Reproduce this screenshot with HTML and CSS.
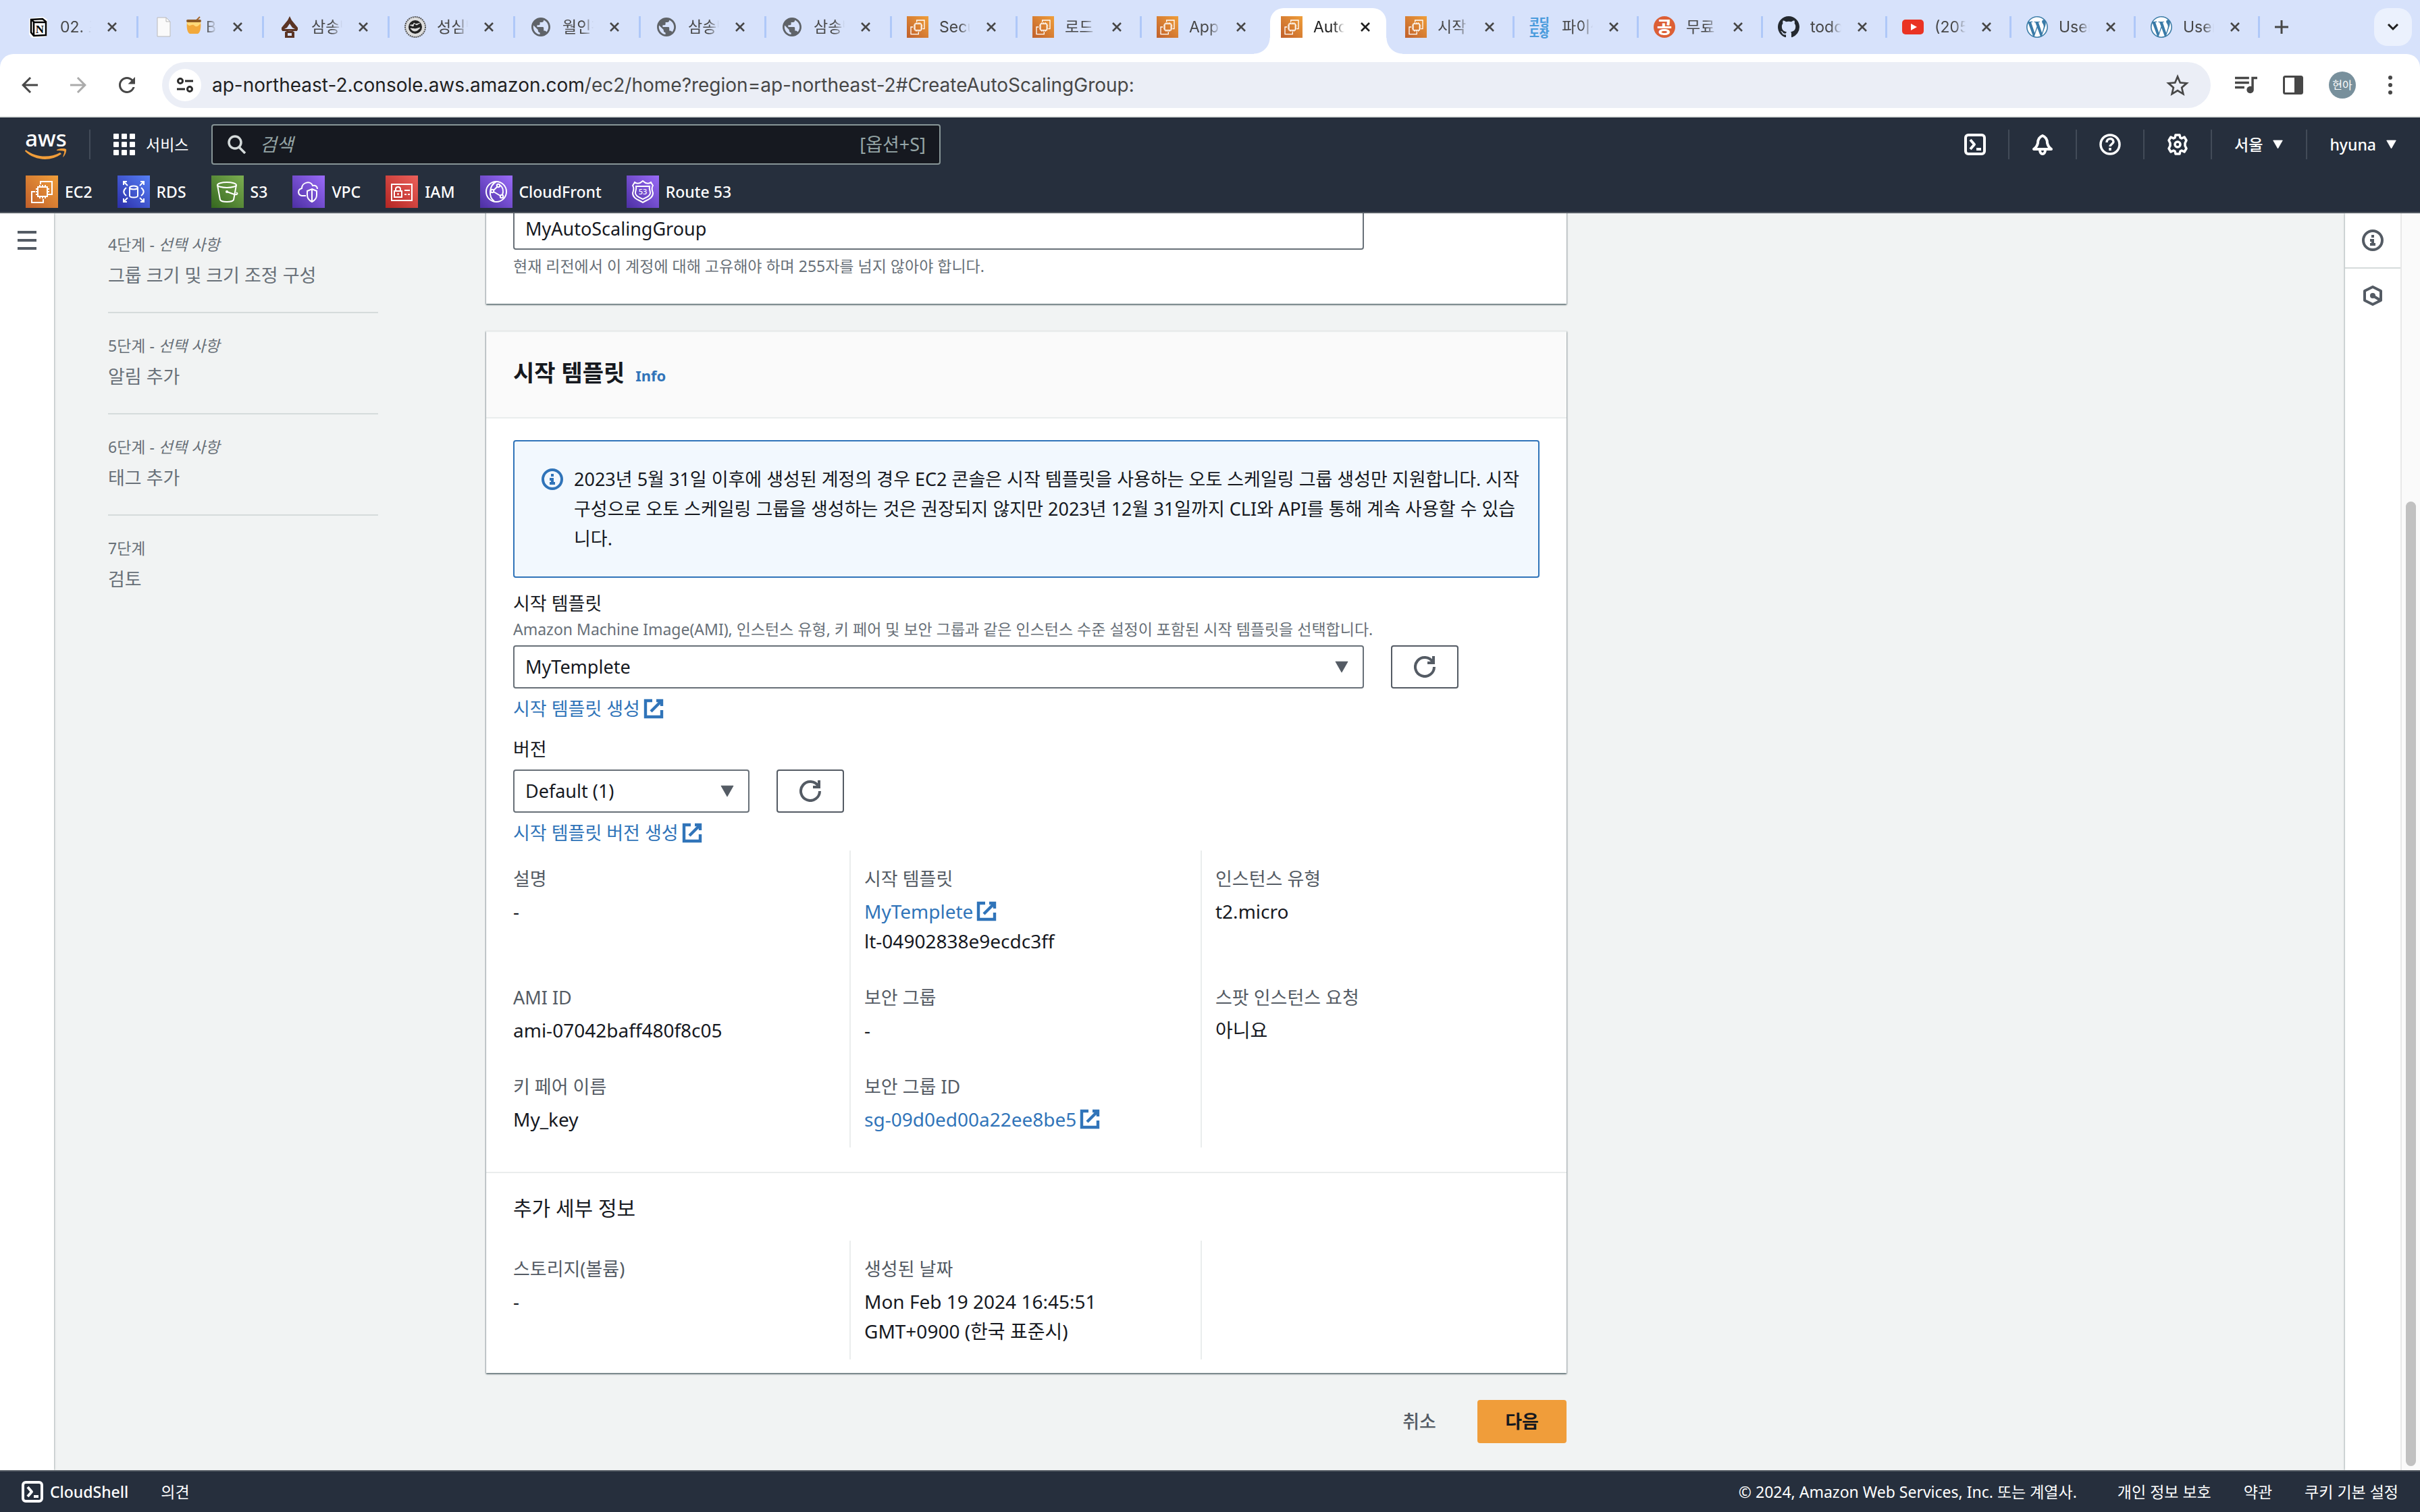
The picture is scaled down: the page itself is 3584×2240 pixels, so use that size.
FILE: index.html
```html
<!DOCTYPE html>
<html lang="ko">
<head>
<meta charset="utf-8">
<title>Auto Scaling 그룹 생성</title>
<link rel="stylesheet" href="styles.css">
</head>
<body>
<svg class="sprite" aria-hidden="true">
  <symbol id="close" viewBox="0 0 14 14"><path d="M1 1l12 12M13 1L1 13" fill="none" stroke="currentColor" stroke-width="2.6"/></symbol>
  <symbol id="globe" viewBox="2 2 20 20"><path fill="#5f6368" d="M12 2C6.48 2 2 6.48 2 12s4.48 10 10 10 10-4.48 10-10S17.52 2 12 2zm-1 17.93c-3.95-.49-7-3.85-7-7.93 0-.62.08-1.21.21-1.79L9 15v1c0 1.1.9 2 2 2v1.93zm6.9-2.54c-.26-.81-1-1.39-1.9-1.39h-1v-3c0-.55-.45-1-1-1H8v-2h2c.55 0 1-.45 1-1V7h2c1.1 0 2-.9 2-2v-.41c2.93 1.19 5 4.06 5 7.41 0 2.08-.8 3.97-2.1 5.39z"/></symbol>
  <symbol id="wordpress" viewBox="0 0 24 24"><circle cx="12" cy="12" r="12" fill="#fff"/><path fill="#3a7ba8" d="M21.469 6.825c.84 1.537 1.318 3.3 1.318 5.175 0 3.979-2.156 7.456-5.363 9.325l3.295-9.527c.615-1.54.82-2.771.82-3.864 0-.405-.026-.78-.07-1.11m-7.981.105c.647-.03 1.232-.105 1.232-.105.582-.075.514-.93-.067-.899 0 0-1.755.135-2.88.135-1.064 0-2.85-.15-2.85-.15-.585-.03-.661.855-.075.885 0 0 .54.061 1.125.09l1.68 4.605-2.37 7.08L5.354 6.9c.649-.03 1.234-.1 1.234-.1.585-.075.516-.93-.065-.896 0 0-1.746.138-2.874.138-.2 0-.438-.008-.69-.015C4.911 3.15 8.235 1.215 12 1.215c2.809 0 5.365 1.072 7.286 2.833-.046-.003-.091-.009-.141-.009-1.06 0-1.812.923-1.812 1.914 0 .89.513 1.643 1.06 2.531.411.72.89 1.643.89 2.977 0 .915-.354 1.994-.821 3.479l-1.075 3.585-3.9-11.61.001.014zM12 22.784c-1.059 0-2.081-.153-3.048-.437l3.237-9.406 3.315 9.087c.024.053.05.101.078.149-1.12.393-2.325.609-3.582.609M1.211 12c0-1.564.336-3.05.935-4.39L7.29 21.709C3.694 19.96 1.212 16.271 1.211 12M12 0C5.385 0 0 5.385 0 12s5.385 12 12 12 12-5.385 12-12S18.615 0 12 0"/></symbol>
  <symbol id="ec2" viewBox="0 0 48 48"><g fill="none" stroke="#fff" stroke-width="2"><path d="M22 13V9h17v19h-4M14 24H9v16h17v-5"/><rect x="18" y="17" width="14" height="14"/><path d="M21 17v-3M25 17v-3M29 17v-3M21 34v-3M25 34v-3M29 34v-3M18 20h-3M18 24h-3M18 28h-3M35 20h-3M35 24h-3M35 28h-3"/></g></symbol>
  <symbol id="rds" viewBox="0 0 48 48"><g fill="none" stroke="#fff" stroke-width="2"><path d="M9 14V9h5M9 9l6 6M34 9h5v5M39 9l-6 6M9 34v5h5M9 39l6-6M39 34v5h-5M39 39l-6-6"/><ellipse cx="24" cy="18" rx="6" ry="2.5"/><path d="M18 18v12c0 3.300 12 3.300 12 0V18M13 18c-5 4-5 8 0 12M35 18c5 4 5 8 0 12"/></g></symbol>
  <symbol id="s3" viewBox="0 0 48 48"><g fill="none" stroke="#fff" stroke-width="2"><ellipse cx="23" cy="14" rx="14" ry="4"/><path d="M9 14l4 22c2 4 18 4 20 0l4-22M23 24l11 4c4 1 6-1 3-3"/></g><circle cx="23" cy="24" r="2" fill="#fff"/></symbol>
  <symbol id="vpc" viewBox="0 0 48 48"><g fill="none" stroke="#fff" stroke-width="2"><path d="M20 30h-6c-6-1-7-9 0-11 0-9 13-12 16-4 4-1 7 1 7 5"/><path d="M29 20l7 3v6c0 5-3 8-7 10-4-2-7-5-7-10v-6zM29 20v19"/></g></symbol>
  <symbol id="iam" viewBox="0 0 48 48"><g fill="none" stroke="#fff" stroke-width="2"><rect x="9" y="13" width="30" height="24"/><rect x="13" y="23" width="11" height="9"/><path d="M15 23v-3c0-4 7-4 7 0v3M18.500 26v3M28 22h8M28 28h3M33 28h3"/></g></symbol>
  <symbol id="cloudfront" viewBox="0 0 48 48"><g fill="none" stroke="#fff" stroke-width="2"><circle cx="24" cy="24" r="15"/><path d="M24 9C13 15 12 32 21 38M26 16l-6 6M20 24l10 6"/><circle cx="27" cy="15" r="2.200"/><circle cx="18" cy="23" r="2.200"/><circle cx="32" cy="31" r="2.200"/><path d="M29 14c5 3 6 9 4 15"/></g></symbol>
  <symbol id="route53" viewBox="0 0 48 48"><g fill="none" stroke="#fff" stroke-width="2"><path d="M24 8l4 3c3 1 6 1 8-1l3 5c-3 4-1 7 0 11 0 8-9 10-15 14-6-4-15-6-15-14 1-4 3-7 0-11l3-5c2 2 5 2 8 1z"/><path d="M14 16h20c-1 4 1 6 1 10 0 5-7 7-11 9-4-2-11-4-11-9 0-4 2-6 1-10z"/></g><text x="24" y="28" text-anchor="middle" font-size="11" fill="#fff" font-family="Noto Sans, sans-serif">53</text></symbol>
  <symbol id="external" viewBox="0 0 16 16"><path d="M10 2h4v4M6 10l8-8M14 9v5H2V2h5" fill="none" stroke="currentColor" stroke-width="2.200"/></symbol>
  <symbol id="refresh" viewBox="0 0 16 16"><path d="M10 5h4.500V0M15 8a7 7 0 1 1-1-3.600" fill="none" stroke="currentColor" stroke-width="2"/></symbol>
  <symbol id="info" viewBox="0 0 16 16"><g fill="none" stroke="currentColor" stroke-width="2"><circle cx="8" cy="8" r="7"/><path d="M8 12V8H6M10 11H6M8 6V4"/></g></symbol>
  <symbol id="caret" viewBox="0 0 20 16"><path d="M2 1h16l-8 14z" fill="currentColor" stroke="currentColor" stroke-linejoin="round"/></symbol>
  <symbol id="shell" viewBox="0 0 32 32"><g fill="none" stroke="currentColor" stroke-width="4"><rect x="2" y="2" width="28" height="28" rx="4"/><path d="M9 9l6 7-6 7M18 23h7" stroke-linejoin="round"/></g></symbol>
</svg>

<header class="browser">
  <nav class="tabs" aria-label="탭">
    <div class="tab"><svg class="fav" viewBox="0 0 32 32"><path d="M3 3l20-2 6 4v23l-3 3-20 1-4-5V4z" fill="#fff"/><path d="M5 5l17-1 5 4v20L9 29l-4-5z" fill="#fff" stroke="#000" stroke-width="2.500"/><path d="M5 5l5 4h17M9 9v20" fill="none" stroke="#000" stroke-width="2.500"/><text x="18" y="25" text-anchor="middle" font-size="17" font-weight="700" font-family="Liberation Serif, serif">N</text></svg><span class="tab-title">02. 프</span><button class="x" aria-label="닫기"><svg><use href="#close"/></svg></button></div>
    <div class="tab"><svg class="fav" viewBox="0 0 32 32"><path d="M6 2h13l6 6v22H6z" fill="#fafafa" stroke="#b9b9b9"/><path d="M19 2v6h6" fill="none" stroke="#b9b9b9"/></svg><span class="tab-title"><svg class="honey" viewBox="0 0 24 28"><path d="M16 6l5-5" stroke="#a8672a" stroke-width="2"/><path d="M2 8c-1 8 0 16 4 18h12c4-2 5-10 4-18z" fill="#f2a93b"/><path d="M2 11c4 7 7-1 11 3 3 3 6 0 9-3V8H2z" fill="#ffd978"/><rect x="1" y="5" width="22" height="4" rx="2" fill="#8d5a25"/></svg>B</span><button class="x" aria-label="닫기"><svg><use href="#close"/></svg></button></div>
    <div class="tab"><svg class="fav" viewBox="0 0 32 32"><path d="M16 0l3 6 9 11v4l-8-4-4-6-4 6-8 4v-4l9-11z" fill="#5b3424"/><path d="M5 19h22v3H5zM9 24c0-3 14-3 14 0v8H9zm4 1v4h6v-4z" fill="#5b3424" fill-rule="evenodd"/></svg><span class="tab-title">삼송빵</span><button class="x" aria-label="닫기"><svg><use href="#close"/></svg></button></div>
    <div class="tab"><svg class="fav" viewBox="0 0 32 32"><circle cx="16" cy="16" r="15" fill="#ddd" stroke="#555" stroke-dasharray="2 1" stroke-width="2"/><circle cx="16" cy="16" r="10" fill="#222"/><path d="M8 13l5 2 1-5 4 3 5-3M9 18c4 6 10 5 14-1l-7 2z" fill="#ddd" stroke="#ddd"/></svg><span class="tab-title">성심당</span><button class="x" aria-label="닫기"><svg><use href="#close"/></svg></button></div>
    <div class="tab"><svg class="fav globe"><use href="#globe"/></svg><span class="tab-title">월인천</span><button class="x" aria-label="닫기"><svg><use href="#close"/></svg></button></div>
    <div class="tab"><svg class="fav globe"><use href="#globe"/></svg><span class="tab-title">삼송빵</span><button class="x" aria-label="닫기"><svg><use href="#close"/></svg></button></div>
    <div class="tab"><svg class="fav globe"><use href="#globe"/></svg><span class="tab-title">삼송빵</span><button class="x" aria-label="닫기"><svg><use href="#close"/></svg></button></div>
    <div class="tab"><svg class="fav orange"><use href="#ec2"/></svg><span class="tab-title">Secu</span><button class="x" aria-label="닫기"><svg><use href="#close"/></svg></button></div>
    <div class="tab"><svg class="fav orange"><use href="#ec2"/></svg><span class="tab-title">로드 밸</span><button class="x" aria-label="닫기"><svg><use href="#close"/></svg></button></div>
    <div class="tab before-active"><svg class="fav orange"><use href="#ec2"/></svg><span class="tab-title">Appl</span><button class="x" aria-label="닫기"><svg><use href="#close"/></svg></button></div>
    <div class="tab active"><svg class="fav orange"><use href="#ec2"/></svg><span class="tab-title">Auto</span><button class="x" aria-label="닫기"><svg><use href="#close"/></svg></button></div>
    <div class="tab"><svg class="fav orange"><use href="#ec2"/></svg><span class="tab-title">시작 템</span><button class="x" aria-label="닫기"><svg><use href="#close"/></svg></button></div>
    <div class="tab"><span class="fav dojang">코딩<br>도장</span><span class="tab-title">파이썬</span><button class="x" aria-label="닫기"><svg><use href="#close"/></svg></button></div>
    <div class="tab"><span class="fav gong">공</span><span class="tab-title">무료 온</span><button class="x" aria-label="닫기"><svg><use href="#close"/></svg></button></div>
    <div class="tab"><svg class="fav" viewBox="0 0 16 16"><path fill="#24292f" d="M8 0C3.580 0 0 3.580 0 8c0 3.540 2.290 6.530 5.470 7.590.4.070.550-.170.550-.380 0-.190-.010-.820-.010-1.490-2.010.370-2.530-.490-2.690-.940-.090-.230-.480-.940-.820-1.130-.280-.150-.680-.520-.010-.530.630-.010 1.080.580 1.230.820.720 1.210 1.870.870 2.330.660.070-.520.280-.870.510-1.070-1.780-.2-3.640-.890-3.640-3.950 0-.870.310-1.590.820-2.150-.080-.2-.360-1.020.080-2.120 0 0 .670-.210 2.200.820.640-.180 1.320-.270 2-.270s1.360.090 2 .270c1.530-1.040 2.200-.820 2.200-.820.440 1.100.160 1.920.080 2.120.510.560.820 1.270.820 2.150 0 3.070-1.870 3.750-3.650 3.950.290.250.540.730.540 1.480 0 1.070-.010 1.930-.010 2.200 0 .210.150.460.550.380A8.010 8.010 0 0 0 16 8c0-4.420-3.580-8-8-8z"/></svg><span class="tab-title">todo</span><button class="x" aria-label="닫기"><svg><use href="#close"/></svg></button></div>
    <div class="tab"><svg class="fav" viewBox="0 0 32 32"><rect y="5" width="32" height="22" rx="5" fill="#ea3323"/><path d="M13 11l9 5-9 5z" fill="#fff"/></svg><span class="tab-title">(205)</span><button class="x" aria-label="닫기"><svg><use href="#close"/></svg></button></div>
    <div class="tab"><svg class="fav"><use href="#wordpress"/></svg><span class="tab-title">User</span><button class="x" aria-label="닫기"><svg><use href="#close"/></svg></button></div>
    <div class="tab"><svg class="fav"><use href="#wordpress"/></svg><span class="tab-title">User</span><button class="x" aria-label="닫기"><svg><use href="#close"/></svg></button></div>
    <button class="new-tab" aria-label="새 탭"><svg viewBox="0 0 22 22"><path d="M11 1v20M1 11h20" fill="none" stroke="currentColor" stroke-width="3"/></svg></button>
    <button class="tab-search" aria-label="탭 검색"><svg viewBox="0 0 20 20"><path d="M3 6l7 7 7-7" fill="none" stroke="#1f1f1f" stroke-width="3"/></svg></button>
  </nav>
  <div class="toolbar">
    <button class="tool" aria-label="뒤로"><svg viewBox="4 4 16 16"><path fill="#474747" d="M20 11H7.830l5.590-5.590L12 4l-8 8 8 8 1.410-1.410L7.830 13H20v-2z"/></svg></button>
    <button class="tool" aria-label="앞으로"><svg viewBox="4 4 16 16"><path fill="#ababab" d="M4 11h12.170l-5.590-5.590L12 4l8 8-8 8-1.410-1.410L16.170 13H4v-2z"/></svg></button>
    <button class="tool" aria-label="새로고침"><svg viewBox="4 4 16 16"><path fill="#474747" d="M17.650 6.350C16.200 4.900 14.210 4 12 4c-4.420 0-7.990 3.580-7.990 8s3.570 8 7.990 8c3.730 0 6.840-2.550 7.730-6h-2.080c-.820 2.330-3.040 4-5.650 4-3.310 0-6-2.690-6-6s2.690-6 6-6c1.660 0 3.140.690 4.220 1.780L13 11h7V4l-2.350 2.350z"/></svg></button>
    <div class="omnibox">
      <span class="site"><svg viewBox="0 0 26 24"><g fill="none" stroke="#2b2b2b" stroke-width="3"><circle cx="6" cy="6" r="3.500"/><path d="M13 6h12M1 18h12"/><circle cx="20" cy="18" r="3.500"/></g></svg></span>
      <p class="url"><b>ap-northeast-2.console.aws.amazon.com</b>/ec2/home?region=ap-northeast-2#CreateAutoScalingGroup:</p>
      <button class="star" aria-label="북마크"><svg viewBox="2 2 20 19"><path fill="#474747" d="M22 9.240l-7.190-.620L12 2 9.190 8.630 2 9.240l5.460 4.730L5.820 21 12 17.270 18.180 21l-1.630-7.030L22 9.240zM12 15.400l-3.760 2.270 1-4.280-3.320-2.880 4.380-.380L12 6.100l1.710 4.040 4.380.380-3.320 2.880 1 4.280L12 15.400z"/></svg></button>
    </div>
    <div class="actions">
      <button aria-label="미디어"><svg class="queue" viewBox="3 6 19 14"><path fill="#474747" d="M15 6H3v2h12V6zm0 4H3v2h12v-2zM3 16h8v-2H3v2zM17 6v8.180c-.310-.110-.650-.180-1-.180-1.660 0-3 1.340-3 3s1.340 3 3 3 3-1.340 3-3V8h3V6h-5z"/></svg></button>
      <button aria-label="사이드 패널"><svg class="panel" viewBox="0 0 30 28"><rect x="1.500" y="1.500" width="27" height="25" rx="2" fill="none" stroke="#474747" stroke-width="3"/><path d="M17 2h11v24H17z" fill="#474747"/></svg></button>
      <span class="avatar">현아</span>
      <button aria-label="메뉴"><svg class="dots" viewBox="0 0 6 28"><g fill="#474747"><circle cx="3" cy="3" r="3"/><circle cx="3" cy="14" r="3"/><circle cx="3" cy="25" r="3"/></g></svg></button>
    </div>
  </div>
</header>

<header class="console">
  <div class="primary">
    <a class="aws" href="#">aws<svg viewBox="0 0 62 18"><path d="M1 2c16 12 36 12 51 4l2 2C38 20 14 18 0 4z" fill="#f09d3a"/><path d="M47 2c5-3 13-2 14-1 1 3-2 10-5 12 1-4 3-8 2-9-2-1-6-1-11-1z" fill="#f09d3a"/></svg></a>
    <button class="services"><svg viewBox="0 0 32 32"><g fill="#fff"><rect width="8" height="8" rx="1"/><rect x="12" width="8" height="8" rx="1"/><rect x="24" width="8" height="8" rx="1"/><rect y="12" width="8" height="8" rx="1"/><rect x="12" y="12" width="8" height="8" rx="1"/><rect x="24" y="12" width="8" height="8" rx="1"/><rect y="24" width="8" height="8" rx="1"/><rect x="12" y="24" width="8" height="8" rx="1"/><rect x="24" y="24" width="8" height="8" rx="1"/></g></svg>서비스</button>
    <label class="search"><svg viewBox="0 0 28 28"><g fill="none" stroke="#d5dbdb" stroke-width="3.500"><circle cx="11" cy="11" r="9"/><path d="M17 18l9 9"/></g></svg><input type="search" placeholder="검색" aria-label="검색"><span>[옵션+S]</span></label>
    <div class="utilities">
      <button aria-label="CloudShell"><svg><use href="#shell"/></svg></button>
      <button aria-label="알림"><svg viewBox="0 0 32 32"><g fill="none" stroke="currentColor" stroke-width="4" stroke-linejoin="round"><path d="M16 3c-5 2-7 6-7 11-1 4-3 7-6 9h26c-3-2-5-5-6-9 0-5-2-9-7-11z"/><path d="M12 24c0 8 8 8 8 0"/></g></svg></button>
      <button aria-label="도움말"><svg viewBox="0 0 32 32"><g fill="none" stroke="currentColor" stroke-width="3.500"><circle cx="16" cy="16" r="14"/><path d="M11 13c0-7 10-7 10-1 0 3-5 4-5 7M16 21v4"/></g></svg></button>
      <button aria-label="설정"><svg viewBox="0 0 32 32"><g fill="none" stroke="currentColor" stroke-width="3.500" stroke-linejoin="round"><path d="M13 2h6l1 4 2 1 4-2 3 5-2 4v4l2 4-3 5-4-2-2 1-1 4h-6l-1-4-2-1-4 2-3-5 2-4v-4l-2-4 3-5 4 2 2-1z"/><circle cx="16" cy="16" r="4"/></g></svg></button>
      <button>서울<svg class="caret"><use href="#caret"/></svg></button>
      <button>hyuna<svg class="caret"><use href="#caret"/></svg></button>
    </div>
  </div>
  <nav class="favorites" aria-label="즐겨찾기">
    <a href="#"><svg class="orange"><use href="#ec2"/></svg>EC2</a>
    <a href="#"><svg class="blue"><use href="#rds"/></svg>RDS</a>
    <a href="#"><svg class="green"><use href="#s3"/></svg>S3</a>
    <a href="#"><svg class="purple"><use href="#vpc"/></svg>VPC</a>
    <a href="#"><svg class="red"><use href="#iam"/></svg>IAM</a>
    <a href="#"><svg class="purple"><use href="#cloudfront"/></svg>CloudFront</a>
    <a href="#"><svg class="purple"><use href="#route53"/></svg>Route 53</a>
  </nav>
</header>

<div class="workspace">
  <aside class="rail"><button aria-label="메뉴 열기"><svg viewBox="0 0 28 28"><path d="M0 2h28M0 14h28M0 26h28" stroke="#545b64" stroke-width="4"/></svg></button></aside>

  <ol class="steps">
    <li><small>4단계 - <i>선택 사항</i></small><span>그룹 크기 및 크기 조정 구성</span></li>
    <li><small>5단계 - <i>선택 사항</i></small><span>알림 추가</span></li>
    <li><small>6단계 - <i>선택 사항</i></small><span>태그 추가</span></li>
    <li><small>7단계</small><span>검토</span></li>
  </ol>

  <main class="form">
    <section class="card name-card">
      <input class="field" type="text" value="MyAutoScalingGroup" aria-label="Auto Scaling 그룹 이름">
      <p class="hint">현재 리전에서 이 계정에 대해 고유해야 하며 255자를 넘지 않아야 합니다.</p>
    </section>

    <section class="card">
      <header class="card-head"><h2>시작 템플릿</h2><a href="#">Info</a></header>
      <div class="card-body">
        <div class="alert"><svg><use href="#info"/></svg><p>2023년 5월 31일 이후에 생성된 계정의 경우 EC2 콘솔은 시작 템플릿을 사용하는 오토 스케일링 그룹 생성만 지원합니다. 시작<br>구성으로 오토 스케일링 그룹을 생성하는 것은 권장되지 않지만 2023년 12월 31일까지 CLI와 API를 통해 계속 사용할 수 있습<br>니다.</p></div>

        <div class="group">
          <label for="template">시작 템플릿</label>
          <p class="hint">Amazon Machine Image(AMI), 인스턴스 유형, 키 페어 및 보안 그룹과 같은 인스턴스 수준 설정이 포함된 시작 템플릿을 선택합니다.</p>
          <div class="control">
            <div class="select wide"><select class="field" id="template"><option>MyTemplete</option></select><svg class="caret"><use href="#caret"/></svg></div>
            <button class="reload" aria-label="새로고침"><svg><use href="#refresh"/></svg></button>
          </div>
          <a class="link" href="#">시작 템플릿 생성<svg><use href="#external"/></svg></a>
        </div>

        <div class="group">
          <label for="version">버전</label>
          <div class="control">
            <div class="select"><select class="field" id="version"><option>Default (1)</option></select><svg class="caret"><use href="#caret"/></svg></div>
            <button class="reload" aria-label="새로고침"><svg><use href="#refresh"/></svg></button>
          </div>
          <a class="link" href="#">시작 템플릿 버전 생성<svg><use href="#external"/></svg></a>
        </div>

        <dl class="details">
          <div><dt>설명</dt><dd>-</dd></div>
          <div><dt>시작 템플릿</dt><dd><a class="link" href="#">MyTemplete<svg><use href="#external"/></svg></a></dd><dd>lt-04902838e9ecdc3ff</dd></div>
          <div><dt>인스턴스 유형</dt><dd>t2.micro</dd></div>
          <div><dt>AMI ID</dt><dd>ami-07042baff480f8c05</dd></div>
          <div><dt>보안 그룹</dt><dd>-</dd></div>
          <div><dt>스팟 인스턴스 요청</dt><dd>아니요</dd></div>
          <div><dt>키 페어 이름</dt><dd>My_key</dd></div>
          <div><dt>보안 그룹 ID</dt><dd><a class="link" href="#">sg-09d0ed00a22ee8be5<svg><use href="#external"/></svg></a></dd></div>
          <div></div>
        </dl>
      </div>
      <div class="card-extra">
        <h3>추가 세부 정보</h3>
        <dl class="details">
          <div><dt>스토리지(볼륨)</dt><dd>-</dd></div>
          <div><dt>생성된 날짜</dt><dd>Mon Feb 19 2024 16:45:51<br>GMT+0900 (한국 표준시)</dd></div>
          <div></div>
        </dl>
      </div>
    </section>

    <div class="buttons"><button class="cancel">취소</button><button class="next">다음</button></div>
  </main>

  <aside class="tools">
    <button aria-label="정보"><svg><use href="#info"/></svg></button>
    <button aria-label="진단"><svg viewBox="0 0 32 32"><g fill="none" stroke="currentColor" stroke-width="4"><path d="M16 3l12 6v14l-12 6-12-6V9z" stroke-linejoin="round"/><path d="M16 16l10 6"/></g><circle cx="16" cy="16" r="4" fill="currentColor"/></svg></button>
  </aside>
  <div class="scrollbar"><div class="thumb"></div></div>
</div>

<footer class="footer">
  <a class="cloudshell" href="#"><svg><use href="#shell"/></svg>CloudShell</a>
  <a href="#">의견</a>
  <p>© 2024, Amazon Web Services, Inc. 또는 계열사.</p>
  <a href="#">개인 정보 보호</a>
  <a href="#">약관</a>
  <a href="#">쿠키 기본 설정</a>
</footer>
</body>
</html>
```
FILE: styles.css
```css
* { box-sizing: border-box; margin: 0; padding: 0; }

body {
  display: flex;
  flex-direction: column;
  min-height: 100vh;
  overflow-x: hidden;
  background: #f1f3f3;
  color: #16191f;
  font: 27px/44px "Noto Sans", "Noto Sans CJK KR", sans-serif;
}

button, input, select { font: inherit; color: inherit; background: none; border: 0; }
button { display: flex; align-items: center; justify-content: center; flex: none; }
svg { display: block; flex: none; }
a { color: #3074b9; text-decoration: none; }
.sprite { position: absolute; width: 0; height: 0; }

.orange { background: linear-gradient(45deg, #c05f2b, #f09f3a); }
.blue { background: linear-gradient(45deg, #2c2ea8, #5680f6); }
.green { background: linear-gradient(45deg, #35671f, #7cae51); }
.purple { background: linear-gradient(45deg, #4c2fa3, #9a6bf8); }
.red { background: linear-gradient(45deg, #b32623, #ec615b); }

/* Browser chrome */
.browser {
  background: #d7e2fb;
  color: #474747;
  font-family: Inter, "Noto Sans CJK KR", sans-serif;
}
.tabs { display: flex; height: 80px; padding-left: 19px; align-items: center; }
.tab {
  display: flex;
  align-items: center;
  flex: none;
  width: 184px;
  height: 32px;
  padding-left: 22px;
  border-right: 3px solid #afc8f8;
  font-size: 23px;
  line-height: 32px;
}
.tab:nth-child(-n+8) { width: 186px; }
.tab.before-active { border-color: transparent; }
.fav { width: 32px; height: 32px; flex: none; }
.fav.globe { width: 28px; height: 28px; margin: 0 2px; }
.tab-title {
  display: flex;
  width: 46px;
  margin: 0 24px 0 16px;
  overflow: hidden;
  white-space: nowrap;
  -webkit-mask-image: linear-gradient(90deg, #000 65%, transparent);
  mask-image: linear-gradient(90deg, #000 65%, transparent);
}
.honey { width: 24px; height: 28px; margin-right: 6px; }
.x svg { width: 14px; height: 14px; }
.tab.active {
  position: relative;
  width: 172px;
  height: 68px;
  margin: 12px 6px 0;
  padding: 0 0 12px 16px;
  border: 0;
  border-radius: 20px 20px 0 0;
  background: #fff;
  color: #1f1f1f;
}
.tab.active::before, .tab.active::after {
  content: "";
  position: absolute;
  bottom: 0;
  width: 24px;
  height: 24px;
}
.tab.active::before { right: 100%; background: radial-gradient(circle at 0 0, transparent 23px, #fff 24px); }
.tab.active::after { left: 100%; background: radial-gradient(circle at 100% 0, transparent 23px, #fff 24px); }
.dojang {
  color: #4a9bdc;
  font: 900 16px/16px "Noto Sans CJK KR", sans-serif;
  white-space: nowrap;
}
.gong {
  border-radius: 50%;
  background: #dc5f35;
  color: #fff;
  font: 900 24px/30px "Noto Sans CJK KR", sans-serif;
  text-align: center;
}
.new-tab { margin-left: 21px; }
.new-tab svg { width: 22px; height: 22px; }
.tab-search {
  width: 56px;
  height: 56px;
  margin: 0 12px 0 auto;
  border-radius: 20px;
  background: #ebf1fd;
}
.tab-search svg { width: 20px; height: 20px; }

.toolbar {
  display: flex;
  align-items: center;
  height: 94px;
  padding-left: 32px;
  border-bottom: 2px solid #e1e4e3;
  border-radius: 20px 20px 0 0;
  background: #fff;
}
.tool { margin-right: 48px; }
.tool svg { width: 24px; height: 24px; }
.tool:nth-child(3) { margin-right: 40px; }
.omnibox {
  display: flex;
  align-items: center;
  flex: 1;
  height: 68px;
  padding: 0 32px 0 10px;
  border-radius: 34px;
  background: #ebeef6;
}
.site {
  display: grid;
  place-items: center;
  width: 48px;
  height: 48px;
  margin-right: 16px;
  border-radius: 50%;
  background: #fff;
}
.site svg { width: 26px; height: 24px; }
.url { flex: 1; font-size: 28px; }
.url b { color: #1f1f1f; font-weight: 400; }
.star svg { width: 34px; height: 32px; }
.actions { display: flex; align-items: center; gap: 38px; padding: 0 41px 0 36px; }
.queue { width: 33px; height: 26px; }
.panel { width: 30px; height: 28px; }
.actions button:last-child { margin-left: 10px; }
.dots { width: 6px; height: 28px; }
.avatar {
  width: 40px;
  height: 40px;
  border-radius: 50%;
  background: #78909c;
  color: #fff;
  font-size: 16px;
  line-height: 40px;
  text-align: center;
}

/* AWS console header */
.console {
  border-bottom: 2px solid #545b64;
  background: #262f3d;
  color: #fff;
  font-size: 23px;
  font-weight: 500;
}
.console button { gap: 14px; }
.primary { display: flex; align-items: center; height: 80px; padding-left: 37px; }
.aws {
  width: 62px;
  color: #fff;
  font-size: 33px;
  line-height: 30px;
  text-align: center;
}
.aws svg { width: 62px; height: 18px; }
.primary .services {
  width: 181px;
  height: 44px;
  margin-left: 33px;
  padding-left: 34px;
  justify-content: flex-start;
  border-left: 2px solid #424b58;
  gap: 16px;
  font-weight: 400;
}
.services svg { width: 32px; height: 32px; }
.search {
  display: flex;
  align-items: center;
  width: 1080px;
  height: 60px;
  padding: 0 20px 0 22px;
  border: 2px solid #879596;
  border-radius: 4px;
  background: #161920;
  color: #95a5a6;
  font-size: 27px;
  font-weight: 400;
}
.search svg { width: 28px; height: 28px; }
.search input { flex: 1; padding-left: 20px; outline: 0; }
.search input::placeholder { color: #95a5a6; font-style: italic; opacity: 1; }
.utilities { display: flex; align-items: center; margin-left: auto; padding-right: 1px; }
.utilities button { height: 44px; padding: 0 33px; border-left: 2px solid #424b58; }
.utilities button:first-child { border: 0; }
.utilities svg { width: 32px; height: 32px; }
.utilities .caret { width: 17px; height: 14px; }
.favorites { display: flex; align-items: center; gap: 37px; height: 60px; padding-left: 38px; }
.favorites a { display: flex; align-items: center; gap: 10px; color: #fff; }
.favorites svg { width: 48px; height: 48px; }

/* Page body */
.workspace { display: flex; flex: 1; overflow: hidden; }
.rail {
  width: 80px;
  padding: 26px;
  background: #fff;
  box-shadow: 0 0 3px rgba(0, 28, 36, .5);
}
.rail svg { width: 28px; height: 28px; }
.steps { width: 400px; margin: 0 160px 0 80px; color: #687078; list-style: none; }
.steps li {
  display: flex;
  flex-direction: column;
  gap: 8px;
  padding: 32px 0;
  border-bottom: 2px solid #d5dbdb;
}
.steps li:first-child { padding-top: 30px; }
.steps li:last-child { border: 0; }
.steps small { font-size: 23px; line-height: 32px; }

.form { width: 1600px; padding-bottom: 40px; }
.card {
  margin-bottom: 40px;
  border-top: 2px solid #eaeded;
  background: #fff;
  box-shadow: 0 2px 2px rgba(0, 28, 36, .4), 1px 1px 2px rgba(0, 28, 36, .25), -1px 1px 2px rgba(0, 28, 36, .25);
}
/* The first card is scrolled partly under the header. */
.name-card { margin-top: -12px; padding: 0 40px 40px; }
.name-card .hint { margin-top: 8px; }
.field {
  width: 100%;
  height: 64px;
  padding: 0 16px;
  border: 2px solid #687078;
  border-radius: 4px;
  background: #fff;
  appearance: none;
}
.hint { color: #687078; font-size: 23px; line-height: 32px; }
.name-card .field { display: block; width: 1260px; }
.card-head {
  display: flex;
  align-items: baseline;
  gap: 16px;
  padding: 38px 40px 40px;
  border-bottom: 2px solid #eaeded;
  background: #fafafa;
}
.card-head h2 { font-size: 34px; font-weight: 700; }
.card-head a { font-size: 22px; font-weight: 700; }
.card-body { padding: 32px 40px 36px; border-bottom: 2px solid #eaeded; }
.alert {
  display: flex;
  gap: 16px;
  padding: 34px 16px 34px 40px;
  border: 2px solid #3074b9;
  border-radius: 4px;
  background: #f2f8fe;
  white-space: nowrap;
}
.alert svg { width: 32px; height: 32px; margin-top: 6px; color: #3074b9; }
.group { display: flex; flex-direction: column; align-items: flex-start; margin-top: 16px; }
.control { display: flex; gap: 40px; margin: 8px 0; }
.select { display: grid; align-items: center; width: 350px; }
.select.wide { width: 1260px; }
.select > * { grid-area: 1 / 1; }
.select .caret {
  width: 22px;
  height: 18px;
  margin-right: 22px;
  justify-self: end;
  color: #545b64;
  pointer-events: none;
}
.reload {
  width: 100px;
  height: 64px;
  border: 2px solid #545b64;
  border-radius: 4px;
  color: #545b64;
}
.reload svg { width: 32px; height: 32px; }
.link { display: flex; align-items: center; gap: 4px; }
.link svg { width: 32px; height: 32px; }

.details { display: grid; grid-template-columns: repeat(3, 1fr); margin: 0 -20px; }
.card-body .details { margin-top: 4px; }
.details > div { padding: 20px; border-right: 2px solid #eaeded; }
.details > div:nth-child(3n) { border: 0; }
.details dt { margin-bottom: 4px; color: #545b64; }
.details dd { font-size: 28px; }
.card-extra { padding: 30px 40px 20px; }
.card-extra h3 { margin-bottom: 26px; font-size: 30px; font-weight: 400; }

.buttons { display: flex; justify-content: flex-end; gap: 20px; }
.buttons button { width: 132px; height: 64px; border-radius: 4px; font-weight: 700; }
.buttons .cancel { color: #545b64; font-weight: 500; }
.buttons .next { background: #f09d3a; }

.tools {
  width: 82px;
  margin-left: auto;
  background: #fff;
  box-shadow: 0 0 3px rgba(0, 28, 36, .5);
}
.tools button { width: 100%; height: 82px; border-bottom: 2px solid #d5dbdb; color: #545b64; }
.tools button:last-child { height: 80px; border: 0; }
.tools svg { width: 32px; height: 32px; }
.scrollbar {
  display: grid;
  grid-template-rows: 427fr 1429fr 6fr;
  width: 29px;
  padding: 0 6px;
  border-left: 2px solid #e8e8e8;
  background: #fafafa;
}
.thumb { grid-row: 2; border-radius: 8px; background: #c1c1c1; }

.footer {
  display: flex;
  align-items: center;
  height: 62px;
  padding: 0 32px;
  gap: 48px;
  border-top: 2px solid #545b64;
  background: #262f3d;
  color: #fff;
  font-size: 23px;
}
.footer a { color: #fff; }
.footer .cloudshell { display: flex; align-items: center; gap: 10px; font-weight: 500; }
.footer svg { width: 32px; height: 32px; }
.footer p { margin: 0 12px 0 auto; }
```
